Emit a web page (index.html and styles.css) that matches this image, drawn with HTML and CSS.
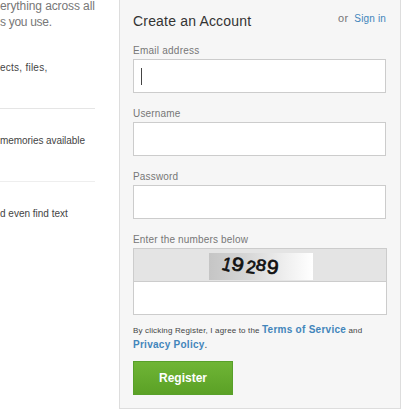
FILE: index.html
```html
<!DOCTYPE html>
<html lang="en">
<head>
<meta charset="utf-8">
<title>Create an Account</title>
<link rel="stylesheet" href="styles.css">
</head>
<body>
<main class="page">
  <section class="features">
    <p class="intro"><span class="intro-a">erything across all</span><br><span class="intro-b">s you use.</span></p>
    <p class="feature first">ects, files,</p>
    <p class="feature second">memories available</p>
    <p class="feature third">d even find text</p>
  </section>
  <form class="panel">
    <header class="head">
      <h1>Create an Account</h1>
      <div class="signin"><span>or</span><a>Sign in</a></div>
    </header>
    <label class="field"><span class="l-email">Email address</span><div class="input"><i class="caret"></i></div></label>
    <label class="field"><span>Username</span><div class="input"></div></label>
    <label class="field"><span>Password</span><div class="input"></div></label>
    <div class="field"><span>Enter the numbers below</span>
      <div class="captcha">
        <div class="captcha-top">
          <svg width="104" height="27" viewBox="0 0 104 27">
            <defs><linearGradient id="g"><stop offset="0" stop-color="#c5c5c5"/><stop offset=".35" stop-color="#d5d5d5"/><stop offset=".72" stop-color="#eee"/><stop offset="1" stop-color="#fff"/></linearGradient></defs>
            <rect width="104" height="27" fill="url(#g)"/>
            <g class="digits">
              <text transform="translate(12 16.5) rotate(14) scale(.85 1)" font-size="19">1</text>
              <text transform="translate(21.5 16.5) rotate(12) scale(1.15 1)" font-size="19">9</text>
              <text transform="translate(36.5 19.5) rotate(8) scale(.95 1)" font-size="18">2</text>
              <text transform="translate(46 16.5) rotate(12) scale(1.15 1)" font-size="16">8</text>
              <text transform="translate(57 20) rotate(8) scale(1.05 1)" font-size="20">9</text>
            </g>
          </svg>
        </div>
        <div class="captcha-input"></div>
      </div>
    </div>
    <p class="terms"><span class="small">By clicking Register, I agree to the</span> <a class="tos">Terms of Service</a> <span class="and">and</span><br><a class="privacy">Privacy Policy</a><span class="dot">.</span></p>
    <button type="button" class="register">Register</button>
  </form>
</main>
</body>
</html>
```
FILE: styles.css
```css
* { box-sizing: border-box; }
body { margin: 0; background: #fff; font-family: "Liberation Sans", Arial, sans-serif; }
h1, p { margin: 0; }
.page { display: flex; width: 416px; height: 417px; overflow: hidden; }
.features { width: 95px; margin-right: 24px; white-space: nowrap; }
.intro { height: 60px; margin-top: -2px; font-size: 12px; line-height: 16px; color: #777; }
.intro-a { letter-spacing: -.1px; }
.intro-b { letter-spacing: -.3px; }
.feature { font-size: 10px; line-height: 14px; color: #444; }
.first { height: 51px; padding-top: 3px; border-bottom: 1px solid #e5e5e5; letter-spacing: .25px; }
.second { height: 73px; padding-top: 25px; border-bottom: 1px solid #eee; letter-spacing: -.07px; }
.third { padding-top: 25px; }
.panel { width: 282px; height: 409px; padding: 0 13px; background: #f6f6f6; border: 1px solid #ddd; border-top: 0; }
.head { display: flex; justify-content: space-between; height: 43px; }
h1 { padding-top: 12px; font-size: 14px; line-height: 18px; font-weight: 400; color: #333; letter-spacing: .18px; }
.signin { display: flex; gap: 6px; padding: 11px 1px 0 0; font-size: 11px; line-height: 14px; color: #777; }
.signin span { letter-spacing: .3px; }
a { color: #4285bb; }
.signin a { padding-top: 1px; font-size: 10px; letter-spacing: .15px; }
.field { display: block; height: 63px; font-size: 10px; line-height: 14px; color: #777; letter-spacing: .17px; }
.field > span { display: block; height: 16px; padding-top: 1px; }
.field > .l-email { letter-spacing: .24px; }
.input { width: 253px; height: 34px; background: #fff; border: 1px solid #ccc; padding: 8px 7px; }
.caret { display: block; width: 1px; height: 17px; background: #444; }
.captcha { width: 254px; height: 67px; border: 1px solid #ccc; background: #fff; }
.captcha-top { height: 33px; padding: 4px 0 0 75px; background: #e4e4e4; border-bottom: 1px solid #ccc; }
.captcha svg { display: block; overflow: visible; }
.digits { font-family: "Liberation Sans", sans-serif; fill: #111; stroke: #111; stroke-width: .7px; letter-spacing: 0; }
.terms { margin-top: 28px; height: 37px; font-size: 8px; line-height: 14px; color: #444; white-space: nowrap; }
.small { letter-spacing: .16px; }
.and { letter-spacing: .3px; }
.terms a { font-size: 10px; font-weight: 700; letter-spacing: .27px; }
.terms .dot { font-size: 10px; }
.register { display: block; width: 100px; height: 34px; margin-top: 1px; padding: 0; border: 1px solid #58a02a; background: linear-gradient(#6fb536, #5ba126); color: #fff; font: 700 12px "Liberation Sans", sans-serif; }
```
